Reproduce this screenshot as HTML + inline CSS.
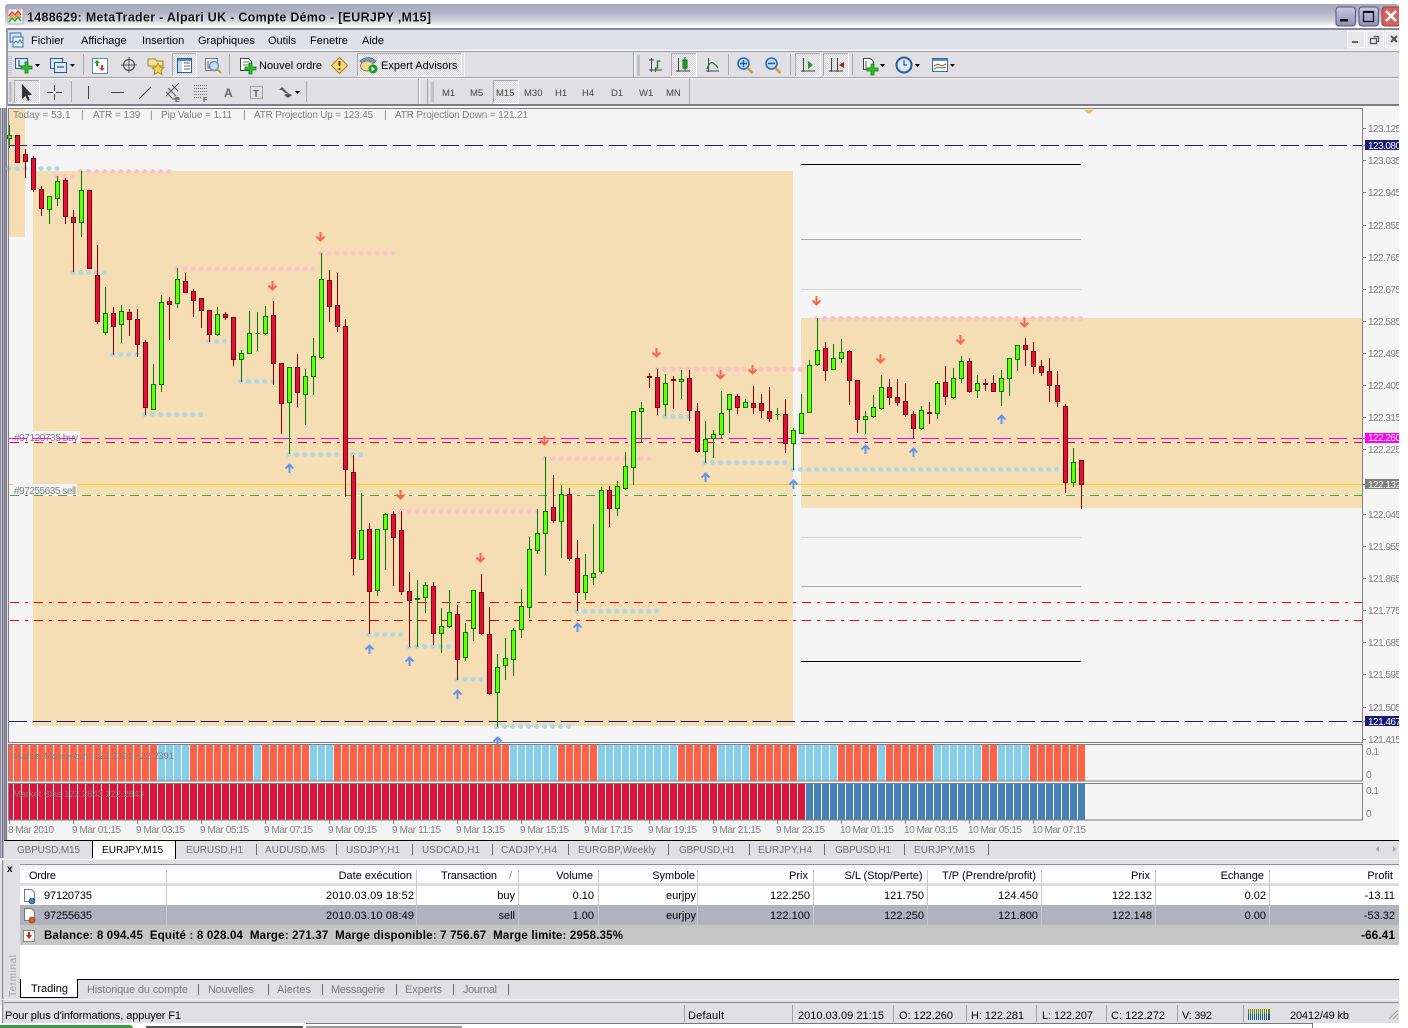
<!DOCTYPE html>
<html lang="fr"><head><meta charset="utf-8"><title>MetaTrader</title>
<style>
html,body{margin:0;padding:0;background:#fff;width:1408px;height:1028px;overflow:hidden}
svg{display:block}
text{font-family:"Liberation Sans",sans-serif;font-size:11px;fill:#000;white-space:pre}
.p text{font-size:10px;fill:#808080}
.c text{font-size:10px;fill:#6d6d6d}
.r{text-anchor:end}
</style></head><body>
<svg width="1408" height="1028" viewBox="0 0 1408 1028" xmlns="http://www.w3.org/2000/svg">
<defs>
<linearGradient id="tb" x1="0" y1="0" x2="0" y2="1"><stop offset="0" stop-color="#a6a6bc"/><stop offset=".35" stop-color="#b4b4c8"/><stop offset=".7" stop-color="#d4d4e0"/><stop offset=".95" stop-color="#fff"/><stop offset="1" stop-color="#fff"/></linearGradient>
<linearGradient id="bt" x1="0" y1="0" x2="0" y2="1"><stop offset="0" stop-color="#c8c8de"/><stop offset="1" stop-color="#8f8fb8"/></linearGradient>
<linearGradient id="hd" x1="0" y1="0" x2="0" y2="1"><stop offset="0" stop-color="#f0f0f4"/><stop offset=".4" stop-color="#fff"/><stop offset="1" stop-color="#fff"/></linearGradient>
<pattern id="dith" width="2" height="2" patternUnits="userSpaceOnUse"><rect width="2" height="2" fill="#f2f2f4"/><rect width="1" height="1" fill="#d8d8dc"/><rect x="1" y="1" width="1" height="1" fill="#d8d8dc"/></pattern>
<g id="ad"><path d="M4.5 0v8M.5 4.5l4 4 4-4" fill="none" stroke="#ff6347" stroke-width="2"/></g>
<g id="au"><path d="M4.5 9V1M.5 4.5l4-4 4 4" fill="none" stroke="#6495ed" stroke-width="2"/></g>
<g id="plus"><path d="M4 0h3v4h4v3H7v4H4V7H0V4h4z" fill="#2fc42f" stroke="#0f7a0f" stroke-width=".8"/></g>
<g id="dd"><path d="M0 0h5l-2.5 3z" fill="#000"/></g>
</defs>

<!-- window -->
<rect width="1408" height="1028" fill="#fff"/>
<rect x="5" y="4" width="1394" height="24" rx="3" fill="url(#tb)"/>
<rect x="6" y="28" width="1393" height="2" fill="#8a889f"/>
<rect x="8" y="30" width="1391" height="20" fill="#dee1ea"/>
<rect x="8" y="50" width="1391" height="1" fill="#fff"/>
<rect x="8" y="51" width="1391" height="1" fill="#9a9aa4"/>
<rect x="8" y="52" width="1391" height="25" fill="#e0dfe3"/>
<rect x="8" y="77" width="1391" height="1" fill="#a0a0a8"/>
<rect x="8" y="78" width="1391" height="1" fill="#f4f4f4"/>
<rect x="8" y="79" width="1391" height="25" fill="#e0dfe3"/>
<rect x="8" y="104" width="1391" height="2" fill="#7e7e86"/>
<rect x="6" y="28" width="2" height="80" fill="#9a9aaa"/>
<rect x="0" y="108" width="1" height="750" fill="#8e8ea0"/><rect x="1" y="108" width="1" height="750" fill="#c8c8d4"/><rect x="2" y="108" width="1" height="750" fill="#6e6e80"/><rect x="3" y="108" width="1" height="750" fill="#b0b0c0"/><rect x="4" y="108" width="1" height="750" fill="#78788a"/><rect x="5" y="108" width="1" height="750" fill="#9a9aaa"/><rect x="6" y="108" width="1" height="750" fill="#6e6e80"/><rect x="7" y="106" width="1" height="752" fill="#e8e8e8"/>

<!-- title -->
<rect x="8" y="9" width="15" height="15" fill="#f0f0f0" stroke="#b0b0b0"/>
<path d="M9 16l3-4 3 3 3-4 3 4" fill="none" stroke="#e04040" stroke-width="1.5"/><path d="M9 19l3-4 3 3 3-4 3 4" fill="none" stroke="#e0a030" stroke-width="1.5"/><path d="M9 22l3-4 3 3 3-4 3 4" fill="none" stroke="#30a040" stroke-width="1.5"/>
<text x="27.6" y="22" textLength="404" style="font-size:12.5px;font-weight:bold;fill:#fff;opacity:.7">1488629: MetaTrader - Alpari UK - Compte Démo - [EURJPY ,M15]</text>
<text x="27" y="21.5" textLength="404" style="font-size:12.5px;font-weight:bold;fill:#111">1488629: MetaTrader - Alpari UK - Compte Démo - [EURJPY ,M15]</text>
<rect x="1336" y="7" width="19.5" height="19" rx="3" fill="url(#bt)" stroke="#55557a"/><rect x="1340" y="19" width="8" height="2.5" fill="#111"/>
<rect x="1359" y="7" width="19.5" height="19" rx="3" fill="url(#bt)" stroke="#55557a"/><rect x="1363.5" y="11.5" width="10" height="10" fill="none" stroke="#111" stroke-width="1.2"/><rect x="1363" y="11" width="11" height="2" fill="#111"/>
<rect x="1382" y="7" width="18" height="19" rx="3" fill="#d8605c" stroke="#90403c"/><path d="M1386 11l10 10M1396 11l-10 10" stroke="#fff" stroke-width="2.6"/>

<!-- menu -->
<rect x="10" y="33" width="11" height="9" fill="#cde0f4" stroke="#3e74ad"/><rect x="13" y="37" width="10" height="10" fill="#e8f2fb" stroke="#3e74ad"/><path d="M14 43l2-2 2 2 2-3 2 3" fill="none" stroke="#3e74ad"/>
<text x="31" y="44">Fichier</text><text x="81" y="44">Affichage</text><text x="142" y="44">Insertion</text><text x="198" y="44">Graphiques</text><text x="268" y="44">Outils</text><text x="310" y="44">Fenetre</text><text x="362" y="44">Aide</text>
<rect x="1347.5" y="31" width="17" height="17" fill="#e8e8ea" stroke="#fff"/><rect x="1352" y="41" width="6" height="2" fill="#666"/>
<rect x="1366.5" y="31" width="17" height="17" fill="#e8e8ea" stroke="#fff"/><path d="M1373.5 36.500h5v5h-2M1370.500 38.500h6v5h-6z" fill="none" stroke="#555" stroke-width="1.200"/>
<rect x="1385.500" y="31" width="14" height="17" fill="#e8e8ea" stroke="#fff"/><path d="M1391 36l6 6M1397 36l-6 6" stroke="#555" stroke-width="2"/>

<!-- toolbar 1 -->
<path d="M9 56v19M11 56v19" stroke="#b0b0b8" stroke-dasharray="1 1"/>
<rect x="15.500" y="58.500" width="12" height="10" fill="#d8e8f8" stroke="#2a5a8a"/><path d="M19 60v6h6" fill="none" stroke="#234"/><use href="#plus" x="21" y="62"/><use href="#dd" x="35" y="64"/>
<rect x="50.500" y="58.500" width="12" height="10" fill="#d8e8f8" stroke="#2a5a8a"/><rect x="54.500" y="62.500" width="12" height="10" fill="#d8e8f8" stroke="#2a5a8a"/><path d="M57 67h7" stroke="#234"/><use href="#dd" x="70" y="64"/>
<path d="M83.500 54v21" stroke="#a8a8b0"/>
<rect x="92.500" y="58.500" width="15" height="15" fill="#fff" stroke="#5a8ab8"/><path d="M97 60l3 3h-2v3h-2v-3h-2z" fill="#2a9a2a"/><path d="M102 71l-3-3h2v-3h2v3h2z" fill="#d04020"/>
<circle cx="129" cy="65" r="5.500" fill="none" stroke="#555" stroke-width="1.300"/><path d="M129 57v16M121 65h16" stroke="#555"/>
<path d="M148 59h7l2 2h6v5h-15z" fill="#f5e39a" stroke="#a08030"/><path d="M158 63l2 4 4 .500-3 3 1 4-4-2-4 2 1-4-3-3 4-.500z" fill="#f5d040" stroke="#a08030" stroke-width=".8"/>
<rect x="172.500" y="53.500" width="24" height="23" fill="url(#dith)" stroke="#fff"/><path d="M172.500 76V53.500H196" fill="none" stroke="#a8a8b0"/>
<rect x="177.500" y="58.500" width="14" height="14" fill="#fff" stroke="#2a5a9a"/><rect x="178" y="59" width="13" height="2" fill="#5a8ac8"/><rect x="178" y="61" width="4" height="11" fill="#c8daf0"/><path d="M184 63h6M184 66h6M184 69h6" stroke="#666"/>
<rect x="205.500" y="58.500" width="12" height="12" fill="#eef" stroke="#777"/><path d="M208 61v7h7" stroke="#555" fill="none"/><circle cx="214" cy="66" r="4.500" fill="#cde" stroke="#7090b0" stroke-width="1.400"/><path d="M217 69l4 4" stroke="#c0a040" stroke-width="2"/>
<path d="M229.500 54v21" stroke="#a8a8b0"/>
<path d="M240.500 58.500h8l3 3v9h-11z" fill="#fff" stroke="#444"/><path d="M243 62h6M243 65h6" stroke="#777"/><use href="#plus" x="245" y="63"/>
<text x="259" y="69">Nouvel ordre</text>
<path d="M339.500 57.500l8 8-8 8-8-8z" fill="#f8dc70" stroke="#a08030"/><path d="M339.500 61v5" stroke="#7a2a10" stroke-width="2"/><circle cx="339.500" cy="69" r="1.100" fill="#7a2a10"/>
<rect x="357.500" y="53.500" width="104" height="23" fill="url(#dith)" stroke="#fff"/><path d="M357.500 76V53.500H461" fill="none" stroke="#a8a8b0"/>
<path d="M360 61q8-7 16 0l-2 2h-12z" fill="#6a9ad0" stroke="#3a6a9a" stroke-width=".7"/><ellipse cx="367" cy="66" rx="6.500" ry="5" fill="#f0d890" stroke="#a08840"/><circle cx="373" cy="69" r="4.500" fill="#1a9a2a"/><path d="M371.500 66.500l3.500 2.500-3.500 2.500z" fill="#fff"/>
<text x="381" y="69">Expert Advisors</text>
<path d="M464.500 52v25" stroke="#f4f4f4"/>
<path d="M633.500 52v25" stroke="#a0a0a8"/><path d="M634.500 52v25" stroke="#fff"/><rect x="637" y="55" width="3" height="21" fill="#b4b4bc" opacity=".7"/>
<path d="M651.500 58v14M649 70h13M655 70" fill="none" stroke="#444"/><path d="M655.500 72v-4h2v-7h3" fill="none" stroke="#1a7a2a" stroke-width="1.300"/><path d="M649 60h5M649 62" stroke="#444"/>
<rect x="671.500" y="53.500" width="25" height="23" fill="url(#dith)" stroke="#fff"/><path d="M671.500 76V53.500H696" fill="none" stroke="#a8a8b0"/>
<path d="M678.500 58v14M676 71h14" stroke="#444"/><rect x="683" y="60" width="4" height="8" fill="#2fc42f" stroke="#0f6a1a"/><path d="M685 57v14" stroke="#0f6a1a"/>
<path d="M708.500 58v14M706 71h13" stroke="#444"/><path d="M707 69q3-8 6-6t5 5" fill="none" stroke="#1a7a2a" stroke-width="1.200"/>
<path d="M728.500 54v21" stroke="#a8a8b0"/>
<circle cx="743.500" cy="63.500" r="5.500" fill="#bcd8f4" stroke="#2a6ab0" stroke-width="1.600"/><path d="M740 63.500h7M743.500 60v7" stroke="#1a5aa0" stroke-width="1.400"/><path d="M747.500 68l5 5" stroke="#c8a030" stroke-width="2.500"/>
<circle cx="771.500" cy="63.500" r="5.500" fill="#bcd8f4" stroke="#2a6ab0" stroke-width="1.600"/><path d="M768 63.500h7" stroke="#1a5aa0" stroke-width="1.400"/><path d="M775.500 68l5 5" stroke="#c8a030" stroke-width="2.500"/>
<path d="M790.500 54v21" stroke="#a8a8b0"/>
<rect x="795.500" y="53.500" width="25" height="23" fill="url(#dith)" stroke="#fff"/><path d="M795.500 76V53.500H820" fill="none" stroke="#a8a8b0"/><path d="M803.500 58v14M801 71h14" stroke="#444"/><path d="M808 61l5 4-5 4z" fill="#1a9a2a"/>
<rect x="823.500" y="53.500" width="25" height="23" fill="url(#dith)" stroke="#fff"/><path d="M823.500 76V53.500H848" fill="none" stroke="#a8a8b0"/><path d="M831.500 58v14M829 71h14M837.500 58v14" stroke="#444"/><path d="M844 62l-5 3 5 3z" fill="#a02010"/>
<path d="M852.500 54v21" stroke="#a8a8b0"/>
<path d="M863.500 58.500h7l3 3v8h-10z" fill="#fff" stroke="#444"/><path d="M866 61v7h6" fill="none" stroke="#555"/><use href="#plus" x="867" y="64"/><use href="#dd" x="880" y="64"/>
<circle cx="904" cy="65" r="7.500" fill="#d8e8f8" stroke="#2a5a9a" stroke-width="2"/><path d="M904 60v5h3" fill="none" stroke="#234"/><use href="#dd" x="915" y="64"/>
<rect x="932.500" y="58.500" width="15" height="13" fill="#fff" stroke="#3a6aa0"/><rect x="933" y="59" width="14" height="2" fill="#5a8ac8"/><path d="M934 66l4-2 4 2 4-2" fill="none" stroke="#d04020"/><path d="M934 69l4-2 4 1 4-1" fill="none" stroke="#2a9a2a"/><use href="#dd" x="950" y="64"/>

<!-- toolbar 2 -->
<rect x="9" y="82" width="3" height="20" fill="#b4b4bc" opacity=".7"/>
<rect x="14.500" y="80.500" width="25" height="23" fill="url(#dith)" stroke="#fff"/><path d="M14.500 103V80.500H39" fill="none" stroke="#a8a8b0"/>
<path d="M22 84v15l3.500-3 2.500 5 2-1-2.500-5h4.500z" fill="#333"/>
<path d="M54.500 85v6M54.500 94v6M47 92.500h6M56 92.500h6" stroke="#444"/>
<path d="M71.500 81v21" stroke="#a8a8b0"/>
<path d="M88.500 86v13" stroke="#444"/><path d="M111 92.500h13" stroke="#444"/><path d="M139 99l12-12" stroke="#444"/>
<path d="M166 96l13-13M168 88l8 8M172 85l6 6M166 92l6 6M172 99h8" stroke="#555" fill="none"/><text x="175" y="102" style="font-size:7px;font-weight:bold;fill:#555">E</text>
<path d="M194 85.500h13M194 88.500h13M194 91.500h13M194 94.500h13M194 97.500h8" stroke="#666" stroke-dasharray="1 1"/><text x="203" y="102" style="font-size:7px;font-weight:bold;fill:#555">F</text>
<text x="224" y="97" style="font-size:12px;font-weight:bold;fill:#666">A</text>
<rect x="250.500" y="86.500" width="12" height="12" fill="none" stroke="#666" stroke-dasharray="1 1"/><text x="253" y="97" style="font-size:10px;font-weight:bold;fill:#666">T</text>
<path d="M279 90l3-3 3 3 3 3-3 0-3-3zM284 95l4 3 4-3-4-2z" fill="#555"/><use href="#dd" x="295" y="91"/>
<path d="M306.500 81v21" stroke="#a8a8b0"/><path d="M418.500 79v25" stroke="#a0a0a8"/><path d="M419.500 79v25" stroke="#fff"/><path d="M427.500 79v25" stroke="#a0a0a8"/><rect x="431" y="82" width="3" height="20" fill="#b4b4bc" opacity=".7"/>
<rect x="493.500" y="80.500" width="25" height="23" fill="url(#dith)" stroke="#fff"/><path d="M493.500 103V80.500H518" fill="none" stroke="#a8a8b0"/>
<g style="font-size:10px"><text x="442" y="96" style="font-size:9.500px;fill:#444">M1</text><text x="470" y="96" style="font-size:9.500px;fill:#444">M5</text><text x="496" y="96" style="font-size:9.500px;fill:#444">M15</text><text x="524" y="96" style="font-size:9.500px;fill:#444">M30</text><text x="555" y="96" style="font-size:9.500px;fill:#444">H1</text><text x="582" y="96" style="font-size:9.500px;fill:#444">H4</text><text x="611" y="96" style="font-size:9.500px;fill:#444">D1</text><text x="639" y="96" style="font-size:9.500px;fill:#444">W1</text><text x="666" y="96" style="font-size:9.500px;fill:#444">MN</text></g>
<path d="M689.500 79v25" stroke="#a8a8b0"/>

<!-- chart bg -->
<rect x="8" y="106" width="1391" height="733" fill="#f5f5f5"/>
<rect x="9" y="108" width="16" height="129" fill="#f5deb3"/>
<rect x="33" y="171" width="760" height="555" fill="#f5deb3"/>
<rect x="801" y="318" width="561" height="190" fill="#f5deb3"/>
<path d="M801 164.500h280" stroke="#000"/><path d="M801 239.500h280" stroke="#a9a9a9"/><path d="M801 289.500h280" stroke="#d3d3d3"/><path d="M801 537.500h280" stroke="#d3d3d3"/><path d="M801 586.500h280" stroke="#a9a9a9"/><path d="M801 661.500h280" stroke="#000"/>

<rect x="13" y="431" width="67" height="12" fill="#f5f5f5"/>
<text x="14" y="441" style="font-size:10px;fill:#808080" textLength="64">#97120735 buy</text>

<g shape-rendering="crispEdges" fill="none">
<path d="M9 145.500H1362M9 721.500H1362" stroke="#191970" stroke-dasharray="18 6"/>
<path d="M9 438.500H1362" stroke="#f0f" stroke-dasharray="18 6"/>
<path d="M10 442.500H1362M10 495.500H1362" stroke="#f5f5f5"/>
<path d="M10 442.500H1362M10 602.500H1362M10 620.500H1362" stroke="#f00" stroke-dasharray="9 6 3 6"/>
<path d="M9 484.500H1362" stroke="#ffd700"/>
<path d="M10 495.500H1362" stroke="#32b432" stroke-dasharray="9 6 3 6"/>
</g>
<rect x="13" y="484" width="64" height="11" fill="#f5f5f5"/>
<text x="14" y="494" style="font-size:10px;fill:#808080" textLength="62">#97255635 sell</text>

<!-- dots -->
<g fill="none" stroke-linecap="round" stroke-width="5" stroke-dasharray="0 8">
<path stroke="#ffc0cb" d="M80.500 171.500H169M56.500 176.500H73M320.500 253.500H393M176.500 268.500H313M400.500 511.500H537M544.500 458.500H649M656.500 369.500H801M816.500 318.500H1081"/>
<path stroke="#add8e6" d="M9 168.500H65M72.500 272.500H105M112.500 354.500H137M208.500 341.500H233M240.500 381.500H281M144.500 414.500H201M288.500 454.500H361M368.500 634.500H401M408.500 646.500H449M456.500 679.500H489M496.500 726.500H569M576.500 611.500H657M664.500 416.500H697M704.500 462.500H785M792.500 469.500H1081"/>
</g>

<!-- candles -->
<g shape-rendering="crispEdges" fill="none">
<path stroke="#8b0000" d="M25.500 149V178M33.500 156V192M41.500 186V216M65.500 178V224M73.500 210V272M97.500 245V324M113.500 307V355M129.500 309V336M137.500 309V357M145.500 340V415M169.500 297V340M185.500 273V293M193.500 289V317M201.500 298V328M209.500 310V342M225.500 312V320M233.500 317V366M273.500 301V385M281.500 363V434M297.500 354V407M329.500 270V322M337.500 273V332M345.500 319V497M353.500 455V575M369.500 523V634M393.500 511V586M401.500 511V595M409.500 572V647M433.500 582V645M457.500 605V680M481.500 574V635M489.500 607V695M553.500 475V523M569.500 488V561M577.500 540V611M609.500 486V527M649.500 373V388M657.500 369V415M673.500 376V409M689.500 370V421M697.500 403V453M737.500 394V414M753.500 386V414M761.500 394V418M769.500 387V422M785.500 399V453M825.500 342V381M849.500 350V405M857.500 380V433M889.500 379V405M897.500 379V406M905.500 383V417M913.500 411V438M929.500 402V424M945.500 366V405M969.500 358V393M985.500 379V391M993.500 375V392M1025.500 338V366M1033.500 342V374M1041.500 360V376M1049.500 358V402M1057.500 371V407M1065.500 404V493M1081.500 460V509"/>
<path stroke="#008000" d="M9.500 125V148M49.500 196V224M57.500 176V206M81.500 171V237M105.500 287V335M121.500 305V343M153.500 364V410M161.500 295V392M177.500 268V308M217.500 307V336M241.500 350V382M249.500 311V354M257.500 312V351M265.500 306V335M289.500 367V454M305.500 369V425M313.500 338V395M321.500 253V359M361.500 493V560M377.500 529V596M385.500 513V570M417.500 580V647M425.500 582V613M441.500 608V653M449.500 590V628M465.500 623V661M473.500 590V641M497.500 654V727M505.500 638V680M513.500 628V676M521.500 589V638M529.500 537V618M537.500 509V554M545.500 457V575M561.500 485V558M585.500 554V600M593.500 524V585M601.500 487V574M617.500 481V516M625.500 452V490M633.500 411V485M641.500 402V443M665.500 374V416M681.500 370V399M705.500 421V463M713.500 430V458M721.500 391V439M729.500 394V433M745.500 399V408M777.500 408V420M793.500 428V470M801.500 394V434M809.500 360V413M817.500 318V366M833.500 344V370M841.500 339V363M865.500 411V434M873.500 395V418M881.500 375V410M921.500 406V430M937.500 381V419M953.500 368V399M961.500 356V383M977.500 375V398M1001.500 370V406M1009.500 358V396M1017.500 345V371M1073.500 448V487"/>
<path fill="#dc143c" stroke="#8b0000" d="M15.500 135.500h4V162.500h-4zM23.500 154.500h4V161.500h-4zM31.500 158.500h4V189.500h-4zM39.500 189.500h4V208.500h-4zM63.500 180.500h4V216.500h-4zM71.500 217.500h4V222.500h-4zM87.500 190.500h4V268.500h-4zM95.500 275.500h4V321.500h-4zM111.500 313.500h4V326.500h-4zM127.500 312.500h4V319.500h-4zM135.500 319.500h4V344.500h-4zM143.500 342.500h4V407.500h-4zM167.500 301.500h4V304.500h-4zM183.500 281.500h4V292.500h-4zM191.500 291.500h4V300.500h-4zM199.500 298.500h4V310.500h-4zM207.500 310.500h4V334.500h-4zM223.500 314.500h4V317.500h-4zM231.500 317.500h4V359.500h-4zM271.500 315.500h4V363.500h-4zM279.500 363.500h4V403.500h-4zM295.500 367.500h4V392.500h-4zM327.500 280.500h4V306.500h-4zM335.500 305.500h4V326.500h-4zM343.500 326.500h4V469.500h-4zM351.500 472.500h4V558.500h-4zM367.500 529.500h4V591.500h-4zM391.500 514.500h4V537.500h-4zM399.500 530.500h4V591.500h-4zM407.500 591.500h4V600.500h-4zM431.500 586.500h4V633.500h-4zM455.500 614.500h4V659.500h-4zM479.500 592.500h4V633.500h-4zM487.500 634.500h4V693.500h-4zM551.500 507.500h4V520.500h-4zM567.500 494.500h4V558.500h-4zM575.500 558.500h4V592.500h-4zM607.500 490.500h4V508.500h-4zM647.500 376.500h4V377.500h-4zM655.500 377.500h4V407.500h-4zM671.500 379.500h4V380.500h-4zM687.500 378.500h4V410.500h-4zM695.500 411.500h4V451.500h-4zM735.500 396.500h4V407.500h-4zM751.500 403.500h4V407.500h-4zM759.500 403.500h4V410.500h-4zM767.500 411.500h4V418.500h-4zM783.500 414.500h4V443.500h-4zM823.500 348.500h4V370.500h-4zM847.500 351.500h4V380.500h-4zM855.500 380.500h4V419.500h-4zM887.500 387.500h4V397.500h-4zM895.500 397.500h4V402.500h-4zM903.500 401.500h4V414.500h-4zM911.500 414.500h4V428.500h-4zM927.500 412.500h4V413.500h-4zM943.500 382.500h4V396.500h-4zM967.500 361.500h4V391.500h-4zM983.500 383.500h4V384.500h-4zM991.500 383.500h4V391.500h-4zM1023.500 345.500h4V349.500h-4zM1031.500 351.500h4V366.500h-4zM1039.500 366.500h4V372.500h-4zM1047.500 371.500h4V385.500h-4zM1055.500 385.500h4V401.500h-4zM1063.500 406.500h4V482.500h-4zM1079.500 460.500h4V484.500h-4z"/>
<path fill="#66ff00" stroke="#008000" d="M7.500 135.500h4V138.500h-4zM47.500 196.500h4V209.500h-4zM55.500 181.500h4V198.500h-4zM79.500 190.500h4V222.500h-4zM103.500 313.500h4V332.500h-4zM119.500 311.500h4V324.500h-4zM151.500 384.500h4V409.500h-4zM159.500 302.500h4V384.500h-4zM175.500 279.500h4V303.500h-4zM215.500 314.500h4V334.500h-4zM239.500 353.500h4V359.500h-4zM247.500 333.500h4V353.500h-4zM255.500 333.500h4V333.500h-4zM263.500 316.500h4V333.500h-4zM287.500 367.500h4V402.500h-4zM303.500 376.500h4V394.500h-4zM311.500 356.500h4V376.500h-4zM319.500 279.500h4V357.500h-4zM359.500 530.500h4V559.500h-4zM375.500 529.500h4V590.500h-4zM383.500 514.500h4V529.500h-4zM415.500 598.500h4V599.500h-4zM423.500 585.500h4V597.500h-4zM439.500 626.500h4V633.500h-4zM447.500 612.500h4V626.500h-4zM463.500 632.500h4V657.500h-4zM471.500 590.500h4V628.500h-4zM495.500 667.500h4V692.500h-4zM503.500 658.500h4V665.500h-4zM511.500 630.500h4V659.500h-4zM519.500 606.500h4V629.500h-4zM527.500 549.500h4V607.500h-4zM535.500 533.500h4V550.500h-4zM543.500 511.500h4V533.500h-4zM559.500 494.500h4V521.500h-4zM583.500 575.500h4V592.500h-4zM591.500 573.500h4V577.500h-4zM599.500 490.500h4V571.500h-4zM615.500 486.500h4V508.500h-4zM623.500 466.500h4V488.500h-4zM631.500 411.500h4V467.500h-4zM639.500 408.500h4V411.500h-4zM663.500 383.500h4V404.500h-4zM679.500 379.500h4V381.500h-4zM703.500 439.500h4V451.500h-4zM711.500 434.500h4V438.500h-4zM719.500 413.500h4V434.500h-4zM727.500 394.500h4V409.500h-4zM743.500 402.500h4V407.500h-4zM775.500 414.500h4V414.500h-4zM791.500 430.500h4V443.500h-4zM799.500 413.500h4V433.500h-4zM807.500 365.500h4V412.500h-4zM815.500 350.500h4V364.500h-4zM831.500 358.500h4V369.500h-4zM839.500 352.500h4V358.500h-4zM863.500 416.500h4V419.500h-4zM871.500 407.500h4V416.500h-4zM879.500 387.500h4V408.500h-4zM919.500 410.500h4V428.500h-4zM935.500 383.500h4V413.500h-4zM951.500 378.500h4V397.500h-4zM959.500 361.500h4V378.500h-4zM975.500 383.500h4V390.500h-4zM999.500 378.500h4V391.500h-4zM1007.500 358.500h4V378.500h-4zM1015.500 345.500h4V359.500h-4zM1071.500 462.500h4V482.500h-4z"/>
</g>

<!-- arrows -->
<use href="#ad" x="316" y="232"/><use href="#ad" x="268" y="281"/><use href="#ad" x="396" y="490"/><use href="#ad" x="476" y="553"/><use href="#ad" x="540" y="436"/><use href="#ad" x="652" y="348"/><use href="#ad" x="716" y="370"/><use href="#ad" x="748" y="365"/><use href="#ad" x="812" y="296"/><use href="#ad" x="876" y="354"/><use href="#ad" x="956" y="335"/><use href="#ad" x="1020" y="318"/>
<use href="#au" x="285" y="464"/><use href="#au" x="365" y="645"/><use href="#au" x="405" y="657"/><use href="#au" x="453" y="690"/><use href="#au" x="493" y="737"/><use href="#au" x="573" y="623"/><use href="#au" x="701" y="473"/><use href="#au" x="789" y="480"/><use href="#au" x="861" y="445"/><use href="#au" x="909" y="448"/><use href="#au" x="997" y="415"/>
<path d="M1084 110h10l-5 4z" fill="#f0c040"/>

<!-- frame -->
<rect x="8.500" y="108.500" width="1354" height="634" fill="none" stroke="#808080"/>
<g class="p"><text x="13" y="118">Today = 53.1</text><text x="81" y="118">|</text><text x="93" y="118">ATR = 139</text><text x="150" y="118">|</text><text x="161" y="118" textLength="71">Pip Value = 1.11</text><text x="243" y="118">|</text><text x="254" y="118" textLength="119">ATR Projection Up = 123.45</text><text x="384" y="118">|</text><text x="395" y="118" textLength="133">ATR Projection Down = 121.21</text></g>

<!-- indicator panels -->
<rect x="9" y="745" width="1076" height="36" fill="#ff6347"/>
<g fill="#87ceeb"><rect x="158" y="745" width="32" height="36"/><rect x="254" y="745" width="8" height="36"/><rect x="310" y="745" width="24" height="36"/><rect x="510" y="745" width="48" height="36"/><rect x="598" y="745" width="80" height="36"/><rect x="718" y="745" width="32" height="36"/><rect x="798" y="745" width="40" height="36"/><rect x="878" y="745" width="8" height="36"/><rect x="934" y="745" width="48" height="36"/><rect x="998" y="745" width="32" height="36"/></g>
<rect x="9" y="784" width="797" height="36" fill="#dc143c"/><rect x="806" y="784" width="279" height="36" fill="#4682b4"/>
<path d="M13 763H1085M13 802H1085" stroke="#f5f5f5" stroke-width="38" stroke-dasharray="1 7" shape-rendering="crispEdges"/>
<rect x="8.500" y="744.500" width="1354" height="36.500" fill="none" stroke="#808080"/>
<rect x="8.500" y="783.500" width="1354" height="36.500" fill="none" stroke="#808080"/>
<text x="13" y="759" style="font-size:9.500px;fill:#808080" textLength="161">Market Momentum 122.2391 122.2391</text>
<text x="13" y="797" style="font-size:9.500px;fill:#808080" textLength="131">Market Bias 122.2843 122.2843</text>

<!-- price axis -->
<path stroke="#808080" d="M1363 128.500h3M1363 160.500h3M1363 192.500h3M1363 225.500h3M1363 257.500h3M1363 289.500h3M1363 321.500h3M1363 353.500h3M1363 385.500h3M1363 417.500h3M1363 449.500h3M1363 514.500h3M1363 546.500h3M1363 578.500h3M1363 610.500h3M1363 642.500h3M1363 674.500h3M1363 707.500h3M1363 739.500h3M1363 145.500h3M1363 438.500h3M1363 484.500h3M1363 721.500h3"/>
<g class="p"><text x="1368" y="132" textLength="33">123.125</text><text x="1368" y="164" textLength="33">123.035</text><text x="1368" y="196" textLength="33">122.945</text><text x="1368" y="229" textLength="33">122.855</text><text x="1368" y="261" textLength="33">122.765</text><text x="1368" y="293" textLength="33">122.675</text><text x="1368" y="325" textLength="33">122.585</text><text x="1368" y="357" textLength="33">122.495</text><text x="1368" y="389" textLength="33">122.405</text><text x="1368" y="421" textLength="33">122.315</text><text x="1368" y="453" textLength="33">122.225</text><text x="1368" y="518" textLength="33">122.045</text><text x="1368" y="550" textLength="33">121.955</text><text x="1368" y="582" textLength="33">121.865</text><text x="1368" y="614" textLength="33">121.775</text><text x="1368" y="646" textLength="33">121.685</text><text x="1368" y="678" textLength="33">121.595</text><text x="1368" y="711" textLength="33">121.505</text><text x="1368" y="743" textLength="33">121.415</text>
<text x="1366" y="755" textLength="13">0.1</text><text x="1366" y="778">0</text><text x="1366" y="794" textLength="13">0.1</text><text x="1366" y="817">0</text></g>
<rect x="1365" y="140" width="34" height="10" fill="#191970"/><text x="1368" y="149" textLength="33" style="font-size:10px;fill:#fff">123.080</text>
<rect x="1365" y="433" width="34" height="10" fill="#f0f"/><text x="1368" y="441" textLength="33" style="font-size:10px;fill:#fff">122.260</text>
<rect x="1365" y="479" width="34" height="10" fill="#808080"/><text x="1368" y="488" textLength="33" style="font-size:10px;fill:#fff">122.132</text>
<rect x="1365" y="716" width="34" height="10" fill="#191970"/><text x="1368" y="725" textLength="33" style="font-size:10px;fill:#fff">121.467</text>

<!-- time axis -->
<path stroke="#808080" d="M9.500 820v4M73.500 820v4M137.500 820v4M201.500 820v4M265.500 820v4M329.500 820v4M393.500 820v4M457.500 820v4M521.500 820v4M585.500 820v4M649.500 820v4M713.500 820v4M777.500 820v4M841.500 820v4M905.500 820v4M969.500 820v4M1033.500 820v4"/>
<g class="p"><text x="8" y="833" textLength="46">8 Mar 2010</text><text x="72" y="833" textLength="49">9 Mar 01:15</text><text x="136" y="833" textLength="49">9 Mar 03:15</text><text x="200" y="833" textLength="49">9 Mar 05:15</text><text x="264" y="833" textLength="49">9 Mar 07:15</text><text x="328" y="833" textLength="49">9 Mar 09:15</text><text x="392" y="833" textLength="49">9 Mar 11:15</text><text x="456" y="833" textLength="49">9 Mar 13:15</text><text x="520" y="833" textLength="49">9 Mar 15:15</text><text x="584" y="833" textLength="49">9 Mar 17:15</text><text x="648" y="833" textLength="49">9 Mar 19:15</text><text x="712" y="833" textLength="49">9 Mar 21:15</text><text x="776" y="833" textLength="49">9 Mar 23:15</text><text x="840" y="833" textLength="54">10 Mar 01:15</text><text x="904" y="833" textLength="54">10 Mar 03:15</text><text x="968" y="833" textLength="54">10 Mar 05:15</text><text x="1032" y="833" textLength="54">10 Mar 07:15</text></g>

<!-- chart tabs -->
<rect x="8" y="839" width="1391" height="1" fill="#f8f8e8"/>
<rect x="4" y="840" width="1395" height="19" fill="#e0dfe3"/>
<rect x="4" y="840" width="1395" height="1" fill="#000"/>
<rect x="4" y="859" width="1395" height="1" fill="#f4f4f4"/><rect x="4" y="860" width="1395" height="3" fill="#e0dfe3"/>
<rect x="92.500" y="840.500" width="83" height="18" fill="#fff" stroke="#000"/><path d="M92 858.500h84" stroke="#fff"/><path d="M92.500 840v18M175.500 840v19" stroke="#000"/>
<g class="c"><text x="17" y="853" textLength="63">GBPUSD,M15</text><text x="186" y="853" textLength="57">EURUSD,H1</text><text x="265" y="853" textLength="60">AUDUSD,M5</text><text x="346" y="853" textLength="54">USDJPY,H1</text><text x="422" y="853" textLength="58">USDCAD,H1</text><text x="501" y="853" textLength="56">CADJPY,H4</text><text x="578" y="853" textLength="78">EURGBP,Weekly</text><text x="679" y="853" textLength="56">GBPUSD,H1</text><text x="758" y="853" textLength="54">EURJPY,H4</text><text x="835" y="853" textLength="56">GBPUSD,H1</text><text x="914" y="853" textLength="61">EURJPY,M15</text></g>
<text x="102" y="853" textLength="61" style="font-size:10px">EURJPY,M15</text>
<path stroke="#6c6b5f" d="M256.500 844v11M336.500 844v11M412.500 844v11M492.500 844v11M568.500 844v11M668.500 844v11M749.500 844v11M824.500 844v11M904.500 844v11M988.500 844v11"/>
<path d="M1379 846v6l-3-3zM1393 846v6l3-3z" fill="#a0a0a8"/>

<!-- terminal -->
<rect x="0" y="863" width="1399" height="142" fill="#e0dfe3"/>
<rect x="2" y="860" width="1" height="163" fill="#8a8a98"/><rect x="3" y="860" width="1" height="163" fill="#cfcfd6"/>
<rect x="20" y="864" width="1379" height="115" fill="#fff"/>
<rect x="20" y="864" width="1379" height="1" fill="#909098"/>
<rect x="20" y="865" width="1379" height="18" fill="url(#hd)"/>
<rect x="20" y="883" width="1379" height="3" fill="#dcdce8"/>
<path stroke="#c8c8c8" d="M166.500 870v16M416.500 870v16M518.500 870v16M598.500 870v16M697.500 870v16M813.500 870v16M927.500 870v16M1041.500 870v16M1155.500 870v16M1269.500 870v16"/>
<text x="7" y="872" style="font-size:10px;font-weight:bold">x</text>
<text transform="translate(16,997) rotate(-90)" textLength="42" style="font-size:10px;fill:#a0a0a8">Terminal</text>
<g><text x="29" y="879" textLength="27">Ordre</text><text class="r" x="412" y="879">Date exécution</text><text x="441" y="879" textLength="56">Transaction</text><text x="509" y="879" style="fill:#888">/</text><text class="r" x="593" y="879">Volume</text><text class="r" x="695" y="879">Symbole</text><text class="r" x="808" y="879">Prix</text><text class="r" x="922.500" y="879" textLength="78">S/L (Stop/Perte)</text><text class="r" x="1036" y="879" textLength="94">T/P (Prendre/profit)</text><text class="r" x="1150" y="879">Prix</text><text class="r" x="1264" y="879">Echange</text><text class="r" x="1393" y="879">Profit</text></g>
<rect x="20" y="905" width="1379" height="20" fill="#b0b2bd"/>
<rect x="20" y="925" width="1379" height="20" fill="#c6c6c6"/>
<path stroke="#c8c8c8" d="M166.500 886v19M416.500 886v19M518.500 886v19M598.500 886v19M697.500 886v19M813.500 886v19M927.500 886v19M1041.500 886v19M1155.500 886v19M1269.500 886v19"/>
<path stroke="#c4c6cd" d="M166.500 905v20M416.500 905v20M518.500 905v20M598.500 905v20M697.500 905v20M813.500 905v20M927.500 905v20M1041.500 905v20M1155.500 905v20M1269.500 905v20"/>
<path d="M24.500 889.500h7l3 3v9h-10z" fill="#fff" stroke="#777"/><circle cx="32" cy="901" r="3" fill="#3a80c8" stroke="#1a4a80" stroke-width=".6"/>
<path d="M24.500 908.500h7l3 3v9h-10z" fill="#fff" stroke="#777"/><circle cx="32" cy="920" r="3" fill="#e05a20" stroke="#803010" stroke-width=".6"/>
<rect x="23.500" y="930.500" width="11" height="11" fill="#f8f8f8" stroke="#888"/><path d="M28 932h2v3h2l-3 4-3-4h2z" fill="#d02010"/>
<g><text x="44" y="899" textLength="48">97120735</text><text class="r" x="414" y="899" textLength="88">2010.03.09 18:52</text><text class="r" x="515" y="899">buy</text><text class="r" x="594" y="899">0.10</text><text class="r" x="696" y="899">eurjpy</text><text class="r" x="810" y="899" textLength="40">122.250</text><text class="r" x="924" y="899" textLength="40">121.750</text><text class="r" x="1038" y="899" textLength="40">124.450</text><text class="r" x="1152" y="899" textLength="40">122.132</text><text class="r" x="1266" y="899">0.02</text><text class="r" x="1395" y="899">-13.11</text></g>
<g><text x="44" y="919" textLength="48">97255635</text><text class="r" x="414" y="919" textLength="88">2010.03.10 08:49</text><text class="r" x="515" y="919">sell</text><text class="r" x="594" y="919">1.00</text><text class="r" x="696" y="919">eurjpy</text><text class="r" x="810" y="919" textLength="40">122.100</text><text class="r" x="924" y="919" textLength="40">122.250</text><text class="r" x="1038" y="919" textLength="40">121.800</text><text class="r" x="1152" y="919" textLength="40">122.148</text><text class="r" x="1266" y="919">0.00</text><text class="r" x="1395" y="919">-53.32</text></g>
<text x="44" y="939" textLength="579" style="font-weight:bold;font-size:11.500px">Balance: 8 094.45  Equité : 8 028.04  Marge: 271.37  Marge disponible: 7 756.67  Marge limite: 2958.35%</text>
<text class="r" x="1395" y="939" style="font-weight:bold;font-size:12px">-66.41</text>
<rect x="20" y="979" width="1379" height="1" fill="#000"/>
<rect x="20.500" y="979.500" width="57" height="18" fill="#fff" stroke="#000"/><path d="M21 979.500h56" stroke="#fff"/>
<text x="31" y="992" textLength="37">Trading</text>
<g><text x="87" y="993" style="fill:#7a7a7a" textLength="101">Historique du compte</text><text x="208" y="993" style="fill:#7a7a7a" textLength="46">Nouvelles</text><text x="277" y="993" style="fill:#7a7a7a" textLength="34">Alertes</text><text x="331" y="993" style="fill:#7a7a7a" textLength="54">Messagerie</text><text x="405" y="993" style="fill:#7a7a7a" textLength="37">Experts</text><text x="463" y="993" style="fill:#7a7a7a" textLength="34">Journal</text></g>
<path stroke="#6c6b5f" d="M198.500 984v11M268.500 984v11M322.500 984v11M396.500 984v11M453.500 984v11M508.500 984v11"/>
<rect x="0" y="999" width="1399" height="1" fill="#f4f4f4"/>
<rect x="4" y="1002" width="1395" height="1" fill="#8a8a90"/>

<!-- status bar -->
<rect x="4" y="1003" width="1395" height="20" fill="#e0dfe3"/>
<text x="5" y="1019" textLength="176">Pour plus d'informations, appuyer F1</text>
<path stroke="#a0a0a8" d="M684.500 1005v17M792.500 1005v17M893.500 1005v17M966.500 1005v17M1036.500 1005v17M1106.500 1005v17M1177.500 1005v17M1243.500 1005v17"/>
<text x="688" y="1019" textLength="36">Default</text><text x="798" y="1019" textLength="86">2010.03.09 21:15</text><text x="899" y="1019" textLength="54">O: 122.260</text><text x="971" y="1019" textLength="53">H: 122.281</text><text x="1042" y="1019" textLength="51">L: 122.207</text><text x="1111" y="1019" textLength="54">C: 122.272</text><text x="1182" y="1019" textLength="30">V: 392</text><text x="1290" y="1019" textLength="59">20412/49 kb</text>
<g fill="#6a8a10"><rect x="1248" y="1009" width="22" height="5"/></g><g fill="#1a5a80"><rect x="1248" y="1014" width="22" height="6"/></g><path d="M1249.500 1009v12M1251.500 1009v12M1253.500 1009v12M1255.500 1009v12M1257.500 1009v12M1259.500 1009v12M1261.500 1009v12M1263.500 1009v12M1265.500 1009v12M1267.500 1009v12" stroke="#e0dfe3"/>
<path d="M1398 1010l-9 9M1398 1014l-5 5M1398 1018l-1 1" stroke="#a0a0a8"/>
<rect x="0" y="1023" width="1408" height="5" fill="#fff"/>
<path d="M0 1025h130q2 0 3 3H0z" fill="#3f9a3f"/><rect x="146" y="1026" width="157" height="2" fill="#555"/><rect x="306" y="1023" width="1007" height="1" fill="#777"/><rect x="306" y="1026" width="156" height="2" fill="#999"/><rect x="1312" y="1023" width="1" height="5" fill="#777"/>
<rect x="1399" y="0" width="9" height="1028" fill="#fff"/>
</svg>
</body></html>
